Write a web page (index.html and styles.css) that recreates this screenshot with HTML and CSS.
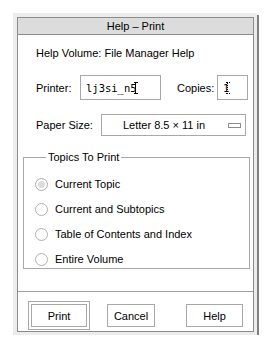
FILE: index.html
```html
<!DOCTYPE html>
<html lang="en">
<head>
    <meta charset="UTF-8">
    <title>Help - Print</title>
    <link rel="stylesheet" href="styles.css">
</head>
<body>

    <div class="window">
        <div class="frame">
            <div class="titlebar">Help &ndash; Print</div>

            <div class="content">
                <div class="volume">Help Volume: File Manager Help</div>

                <div class="row printer-row">
                    <label class="lbl printer-lbl">Printer:</label>
                    <div class="field printer-field"><span class="mono">lj3si_n5</span><span class="caret"></span></div>
                    <label class="lbl copies-lbl">Copies:</label>
                    <div class="field copies-field"><span class="mono">1</span><span class="caret dotted"></span></div>
                </div>

                <div class="row paper-row">
                    <label class="lbl paper-lbl">Paper Size:</label>
                    <div class="option-menu">
                        <span class="option-text">Letter 8.5 &times; 11 in</span>
                        <span class="option-mark"></span>
                    </div>
                </div>

                <fieldset class="topics">
                    <legend>Topics To Print</legend>
                    <div class="radio-item"><span class="radio selected"></span>Current Topic</div>
                    <div class="radio-item"><span class="radio"></span>Current and Subtopics</div>
                    <div class="radio-item"><span class="radio"></span>Table of Contents and Index</div>
                    <div class="radio-item"><span class="radio"></span>Entire Volume</div>
                </fieldset>
            </div>

            <div class="buttons">
                <div class="default-ring"><button class="btn btn-print">Print</button></div>
                <button class="btn btn-cancel">Cancel</button>
                <button class="btn btn-help">Help</button>
            </div>
        </div>
    </div>

</body>
</html>
```

FILE: styles.css
```css
body {
    margin: 0;
    background-color: #ffffff;
    font-family: "Liberation Sans", Arial, sans-serif;
    font-size: 11px;
    color: #000000;
}

.window {
    margin: 13px 0 0 13px;
    width: 237px;
    padding: 4px 3px 3px 4px;
    background-color: #ececec;
    box-shadow: 2px 2px 0 #808080;
}

.frame {
    border: 1px solid #8c8c8c;
    background-color: #ffffff;
}

.titlebar {
    height: 16px;
    line-height: 16px;
    text-align: center;
    background-color: #dcdcdc;
    border-bottom: 1px solid #8c8c8c;
}

.content {
    padding: 11px 3px 0 5px;
}

.volume {
    padding-left: 13px;
    height: 14px;
    line-height: 14px;
}

.row {
    display: flex;
    align-items: center;
    white-space: nowrap;
}

.printer-row {
    margin-top: 15px;
    padding-left: 13px;
}

.printer-lbl {
    width: 44px;
}

.field {
    display: flex;
    align-items: center;
    height: 25px;
    border: 1px solid #a8a8a8;
    padding-left: 5px;
    box-sizing: border-box;
}

.printer-field {
    width: 81px;
}

.copies-lbl {
    width: 40px;
    margin-left: 16px;
}

.copies-field {
    width: 31px;
}

.mono {
    font-family: "DejaVu Sans Mono", "Liberation Mono", monospace;
    font-size: 10.5px;
}

.caret {
    display: inline-block;
    width: 4px;
    height: 12px;
    margin-left: -3px;
    box-sizing: border-box;
    border-top: 1px solid #000000;
    border-bottom: 1px solid #000000;
    background: linear-gradient(#000000, #000000) no-repeat 1px 0 / 1px 100%;
}

.caret.dotted {
    border-top-style: dotted;
    border-bottom-style: dotted;
    background: repeating-linear-gradient(#000000 0 1px, transparent 1px 2px) no-repeat 1px 0 / 1px 100%;
}

.paper-row {
    margin-top: 14px;
    padding-left: 13px;
}

.paper-lbl {
    width: 65px;
}

.option-menu {
    display: flex;
    align-items: center;
    width: 145px;
    height: 22px;
    box-sizing: border-box;
    border: 1px solid #a8a8a8;
    padding: 0 4px 0 21px;
}

.option-text {
    flex: 1;
}

.option-mark {
    width: 13px;
    height: 5px;
    box-sizing: border-box;
    border: 1px solid #8c8c8c;
}

.topics {
    display: flex;
    flex-direction: column;
    gap: 9px;
    margin: 15px 0 0 0;
    padding: 13px 0 1px 11px;
    border: 1px solid #a8a8a8;
}

.topics legend {
    padding: 0 2px;
    margin-left: 11px;
}

.radio-item {
    display: flex;
    align-items: center;
    height: 16px;
    white-space: nowrap;
}

.radio {
    width: 13px;
    height: 13px;
    box-sizing: border-box;
    border: 1px solid #b0b0b0;
    border-radius: 50%;
    margin-right: 7px;
}

.radio.selected {
    background-color: #dcdcdc;
    box-shadow: inset 0 0 0 2px #ffffff;
}

.buttons {
    display: flex;
    align-items: center;
    margin-top: 22px;
    padding: 9px 0 1px 10px;
    border-top: 1px solid #a0a0a0;
}

.default-ring {
    border: 1px solid #a8a8a8;
    padding: 2px;
}

.btn {
    font-family: "Liberation Sans", Arial, sans-serif;
    font-size: 11px;
    background-color: #ffffff;
    border: 1px solid #a8a8a8;
    height: 23px;
    padding: 0;
    color: #000000;
}

.btn-print {
    width: 56px;
}

.btn-cancel {
    width: 48px;
    margin-left: 17px;
}

.btn-help {
    width: 57px;
    margin-left: 31px;
}
```
